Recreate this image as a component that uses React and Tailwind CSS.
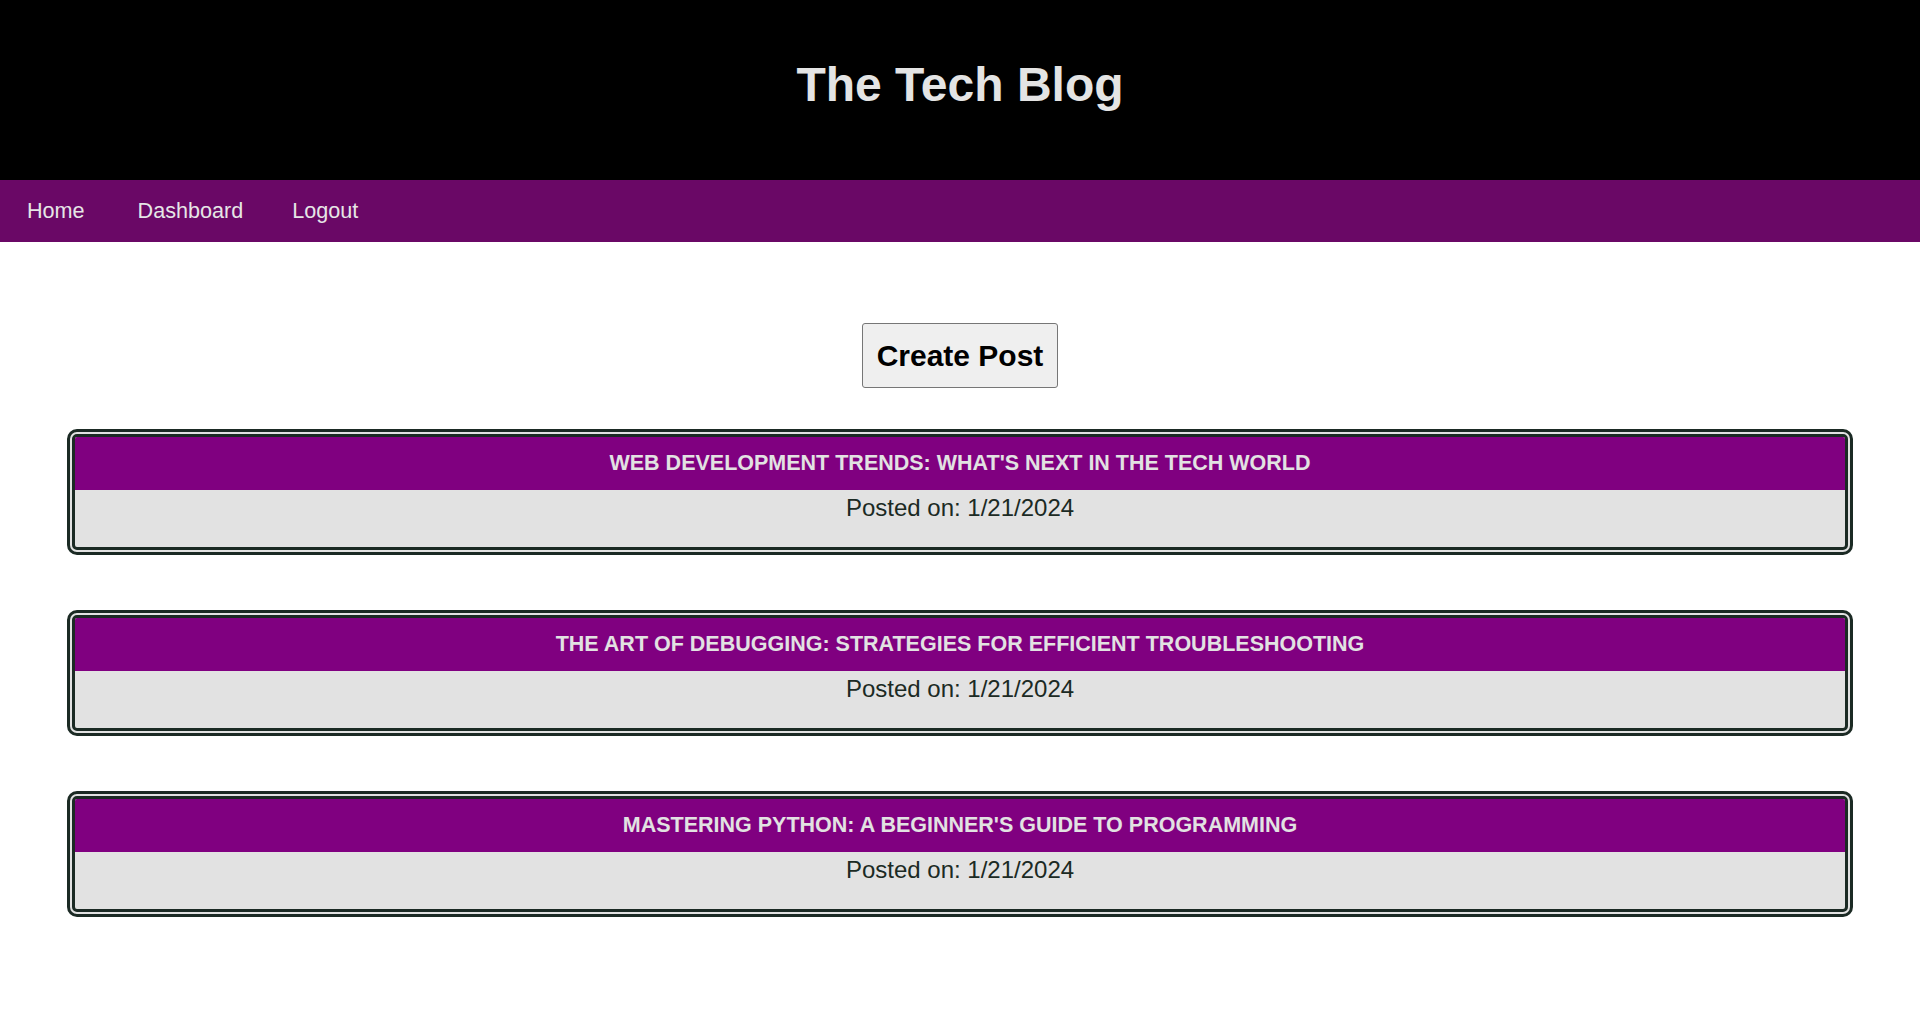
import React from "react";

const posts = [
  "WEB DEVELOPMENT TRENDS: WHAT'S NEXT IN THE TECH WORLD",
  "THE ART OF DEBUGGING: STRATEGIES FOR EFFICIENT TROUBLESHOOTING",
  "MASTERING PYTHON: A BEGINNER'S GUIDE TO PROGRAMMING",
];

export default function App() {
  return (
    <div className="min-h-[1012px] bg-white font-['Liberation_Sans',Arial,sans-serif]">
      <header className="h-[180px] bg-black pt-[57px] text-center">
        <h1 className="text-[48px] font-bold leading-[55px] text-[#e4e4e4]">The Tech Blog</h1>
      </header>
      <nav className="flex h-[62px] items-center bg-[#6a0866] pl-[27px] text-[21.6px] text-[#e6e6e6]">
        <a href="#" className="mr-[53px]">Home</a>
        <a href="#" className="mr-[49px]">Dashboard</a>
        <a href="#">Logout</a>
      </nav>
      <main className="flex flex-col items-center pt-[81px]">
        <button className="rounded-[3px] border border-[#767676] bg-[#efefef] px-[14px] py-[14px] text-[30px] font-bold leading-[35px] text-black">
          Create Post
        </button>
        <div className="mt-[41px] flex w-[93%] flex-col gap-[55px]">
          {posts.map((title) => (
            <div
              key={title}
              className="overflow-hidden rounded-[10px] border-[8px] border-double border-[#1b2a24] bg-[#e2e2e2]"
            >
              <div className="flex h-[53px] items-center justify-center bg-[#800080] text-[21.5px] font-bold text-[#e2e2e2]">
                {title}
              </div>
              <p className="h-[57px] pt-[4px] text-center text-[24px] leading-[28px] text-[#1b2a24]">
                Posted on: 1/21/2024
              </p>
            </div>
          ))}
        </div>
      </main>
    </div>
  );
}
